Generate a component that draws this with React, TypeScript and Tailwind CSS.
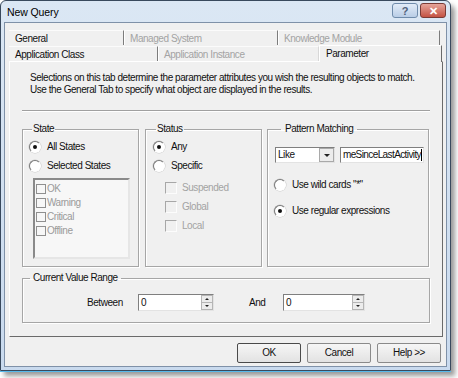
import React from "react";

const Radio = ({ checked, label }: { checked?: boolean; label: string }) => (
  <div className="flex items-center gap-[6px]">
    <span className="w-[12px] h-[12px] rounded-full border border-t-[#7a7a7a] border-l-[#7a7a7a] border-r-[#ffffff] border-b-[#ffffff] bg-white shadow-[0_0_0_0.5px_#c8c8c8] flex items-center justify-center">
      {checked && <span className="w-[4px] h-[4px] rounded-full bg-[#111]" />}
    </span>
    <span>{label}</span>
  </div>
);

const Check = ({ label }: { label: string }) => (
  <div className="flex items-center gap-[5px] text-[#a3a3a3]">
    <span className="w-[12px] h-[12px] border border-t-[#a7a7a7] border-l-[#a7a7a7] border-r-[#fcfcfc] border-b-[#fcfcfc] bg-[#f0f0f0]" />
    <span>{label}</span>
  </div>
);

const Spin = ({ w }: { w: string }) => (
  <div className={`${w} h-[17px] flex border border-t-[#7f7f7f] border-l-[#7f7f7f] border-r-[#e3e3e3] border-b-[#e3e3e3] bg-white`}>
    <div className="flex-1 pl-[2px] leading-[15px]">0</div>
    <div className="w-[12px] flex flex-col">
      <div className="flex-1 bg-[#ececec] border border-[#b5b5b5] flex items-center justify-center">
        <span className="w-0 h-0 border-l-[2px] border-r-[2px] border-b-[2px] border-l-transparent border-r-transparent border-b-[#222]" />
      </div>
      <div className="flex-1 bg-[#ececec] border border-t-0 border-[#b5b5b5] flex items-center justify-center">
        <span className="w-0 h-0 border-l-[2px] border-r-[2px] border-t-[2px] border-l-transparent border-r-transparent border-t-[#222]" />
      </div>
    </div>
  </div>
);

const Btn = ({ label, def }: { label: string; def?: boolean }) => (
  <button
    className={`w-[64px] h-[20px] rounded-[2px] border ${def ? "border-[#4a4a4a]" : "border-[#8a8a8a]"} bg-[linear-gradient(#f6f6f6,#e2e2e2)] text-[#111]`}
  >
    {label}
  </button>
);

const App = () => {
  return (
    <div className="w-[458px] h-[378px] bg-white font-['Liberation_Sans',Arial,sans-serif] text-[10px] tracking-[-0.45px] text-[#111] leading-[12px]">
      {/* window */}
      <div className="w-[451px] h-[371px] rounded-t-[6px] border border-[#39495d] bg-[linear-gradient(#dbe7f4,#c9daee)] shadow-[0_1px_0_#56b8ea,4px_5px_5px_rgba(0,0,0,0.4)] flex flex-col">
        <div className="h-[21px] flex items-center justify-between pl-[6px] pr-[4px]">
          <span className="text-[10.5px] tracking-[-0.1px] text-black">New Query</span>
          <div className="flex gap-[2px] mt-[-2px]">
            <div className="w-[26px] h-[15px] rounded-[3px] border border-[#6f8bab] bg-[linear-gradient(#e2ecf8,#b9cde6)] flex items-center justify-center text-[11px] font-bold text-[#51627a]">
              ?
            </div>
            <div className="w-[26px] h-[15px] rounded-[3px] border border-[#7a3b36] bg-[linear-gradient(#e6a49a,#c45344)] flex items-center justify-center text-[11px] font-bold text-white">
              ✕
            </div>
          </div>
        </div>
        <div className="flex-1 mx-[3px] mb-[3px] border border-[#7f91a8] bg-[#f0f0f0] flex flex-col px-[4px] pt-[7px]">
          {/* tab rows */}
          <div className="flex h-[15px] items-center">
            <div className="w-[115px] h-full border-t border-t-[#fbfbfb] border-r border-r-[#7c7c7c] pl-[6px] leading-[15px]">General</div>
            <div className="w-[154px] h-full border-t border-t-[#fbfbfb] border-l border-l-white border-r border-r-[#7c7c7c] pl-[5px] leading-[15px] text-[#a3a3a3]">
              Managed System
            </div>
            <div className="w-[162px] h-full border-t border-t-[#fbfbfb] border-l border-l-white border-r border-r-[#7c7c7c] pl-[5px] leading-[15px] text-[#a3a3a3]">
              Knowledge Module
            </div>
          </div>
          <div className="flex h-[16px] items-end relative z-10">
            <div className="w-[149px] h-[15px] border-t border-t-[#fbfbfb] border-r border-r-[#7c7c7c] pl-[6px] leading-[15px]">Application Class</div>
            <div className="w-[161px] h-[15px] border-t border-t-[#fbfbfb] border-l border-l-white border-r border-r-[#d8d8d8] pl-[5px] leading-[15px] text-[#a3a3a3]">
              Application Instance
            </div>
            <div className="w-[123px] h-[17px] mb-[-1px] bg-[#f0f0f0] border-t border-t-white border-l border-l-white border-r border-r-[#6a6a6a] pl-[6px] leading-[15px]">
              Parameter
            </div>
          </div>
          {/* panel */}
          <div className="w-[434px] h-[276px] border border-t-white border-l-white border-r-[#6a6a6a] border-b-[#6a6a6a] flex flex-col">
            <div className="pl-[20px] pt-[10px]">
              <div>Selections on this tab determine the parameter attributes you wish the resulting objects to match.</div>
              <div>Use the General Tab to specify what object are displayed in the results.</div>
            </div>
            <div className="mx-[12px] mt-[14px] h-[2px] border-t border-t-[#a0a0a0] border-b border-b-white" />
            <div className="flex pl-[12px] mt-[11px]">
              <fieldset className="w-[117px] h-[144px] border border-[#a6a6a6] shadow-[inset_1px_1px_0_#fff,1px_1px_0_#fff] pl-[6px]">
                <legend className="ml-[3px] px-[1px]">State</legend>
                <div className="flex flex-col gap-[7px] mt-[6px]">
                  <Radio checked label="All States" />
                  <Radio label="Selected States" />
                </div>
                <div className="w-[97px] h-[81px] ml-[4px] mt-[6px] border-2 border-t-[#8a8a8a] border-l-[#8a8a8a] border-r-[#e6e6e6] border-b-[#e6e6e6] bg-[#f7f7f7] pl-[1px] pt-[2px] text-[#9a9a9a]">
                  {["OK", "Warning", "Critical", "Offline"].map((s) => (
                    <div key={s} className="flex items-center gap-[1px] h-[14px]">
                      <span className="w-[10px] h-[10px] border border-[#8f8f8f] bg-[#f7f7f7]" />
                      <span>{s}</span>
                    </div>
                  ))}
                </div>
              </fieldset>
              <fieldset className="w-[117px] h-[144px] ml-[6px] border border-[#a6a6a6] shadow-[inset_1px_1px_0_#fff,1px_1px_0_#fff] pl-[7px]">
                <legend className="ml-[3px] px-[1px]">Status</legend>
                <div className="flex flex-col gap-[7px] mt-[6px]">
                  <Radio checked label="Any" />
                  <Radio label="Specific" />
                </div>
                <div className="flex flex-col gap-[7px] mt-[10px] ml-[12px]">
                  <Check label="Suspended" />
                  <Check label="Global" />
                  <Check label="Local" />
                </div>
              </fieldset>
              <fieldset className="w-[162px] h-[144px] ml-[5px] border border-[#a6a6a6] shadow-[inset_1px_1px_0_#fff,1px_1px_0_#fff] pl-[6px]">
                <legend className="ml-[7px] px-[4px]">Pattern Matching</legend>
                <div className="flex gap-[5px] mt-[12px] ml-[1px]">
                  <div className="w-[60px] h-[16px] flex border border-t-[#7f7f7f] border-l-[#7f7f7f] border-r-[#e3e3e3] border-b-[#e3e3e3] bg-white">
                    <div className="flex-1 pl-[2px] leading-[14px]">Like</div>
                    <div className="w-[15px] h-[14px] bg-[#ececec] border border-[#a9a9a9] flex items-center justify-center">
                      <span className="w-0 h-0 border-l-[3px] border-r-[3px] border-t-[3px] border-l-transparent border-r-transparent border-t-[#222]" />
                    </div>
                  </div>
                  <div className="w-[84px] h-[16px] border border-t-[#7f7f7f] border-l-[#7f7f7f] border-r-[#e3e3e3] border-b-[#e3e3e3] bg-white overflow-hidden flex justify-end pr-[1px] leading-[14px] tracking-[-0.6px] whitespace-nowrap">
                    meSinceLastActivity<span className="w-[1px] h-[12px] mt-[1px] bg-black" />
                  </div>
                </div>
                <div className="flex flex-col gap-[14px] mt-[16px]">
                  <Radio label={'Use wild cards "*"'} />
                  <Radio checked label="Use regular expressions" />
                </div>
              </fieldset>
            </div>
            <fieldset className="w-[408px] h-[51px] ml-[12px] mt-[5px] border border-[#a6a6a6] shadow-[inset_1px_1px_0_#fff,1px_1px_0_#fff]">
              <legend className="ml-[7px] px-[3px]">Current Value Range</legend>
              <div className="flex items-center mt-[10px]">
                <span className="ml-[64px] w-[51px]">Between</span>
                <Spin w="w-[76px]" />
                <span className="ml-[35px] w-[34px]">And</span>
                <Spin w="w-[82px]" />
              </div>
            </fieldset>
          </div>
          <div className="flex justify-end gap-[6px] mt-[6px] pr-[1px]">
            <Btn label="OK" def />
            <Btn label="Cancel" />
            <Btn label="Help >>" />
          </div>
        </div>
      </div>
    </div>
  );
};

export default App;
